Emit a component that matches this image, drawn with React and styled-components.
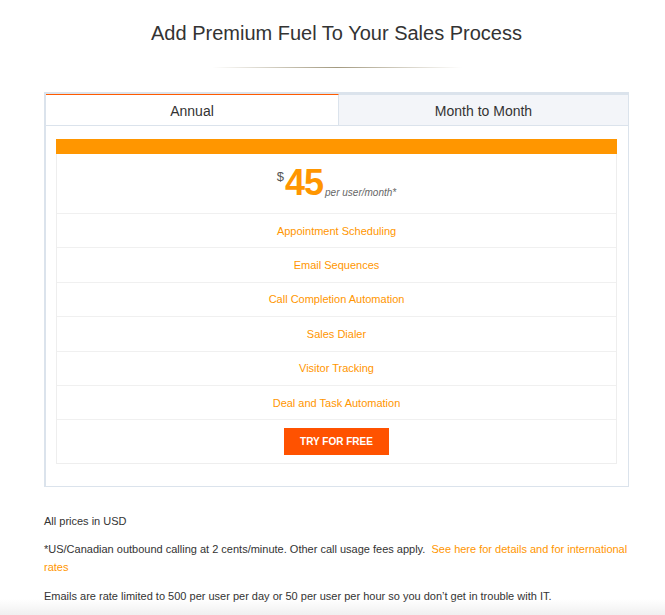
import React, { useState } from "react";
import styled, { createGlobalStyle } from "styled-components";

const Global = createGlobalStyle`
  html, body { margin: 0; padding: 0; background: #fff; }
  body { font-family: "Liberation Sans", Arial, sans-serif; color: #333; }
  * { box-sizing: border-box; }
`;

const Page = styled.div`
  width: 665px;
  height: 615px;
  position: relative;
  overflow: hidden;
  padding: 0 36px 0 44px;
`;

const Title = styled.h1`
  margin: 0;
  padding-top: 21px;
  font-size: 20px;
  font-weight: 400;
  line-height: 24px;
  text-align: center;
  color: #333;
`;

const Divider = styled.div`
  width: 250px;
  height: 1px;
  margin: 22px auto 24px;
  background: linear-gradient(to right, rgba(190,180,150,0), #a39a80 50%, rgba(190,180,150,0));
`;

const Box = styled.div`
  border: 2px solid #dbe3ec;
  border-right-width: 1px;
  border-bottom-width: 1px;
  width: 585px;
`;

const Tabs = styled.div`
  display: flex;
`;

const Tab = styled.button`
  flex: ${(p) => (p.$active ? "0 0 293px" : "1")};
  height: 32px;
  margin: 0;
  padding: 2px 0 0;
  font-family: inherit;
  font-size: 14px;
  color: #333;
  cursor: pointer;
  background: ${(p) => (p.$active ? "#fff" : "#f3f5f9")};
  border: 1px solid #dbe3ec;
  border-top: 1px solid ${(p) => (p.$active ? "#ff5a00" : "#dbe3ec")};
  border-left: none;
  border-right: ${(p) => (p.$active ? "1px solid #dbe3ec" : "none")};
`;

const Content = styled.div`
  padding: 13px 11px 22px 10px;
`;

const Card = styled.div`
  border: 1px solid #eeeeee;
  border-top: none;
`;

const Bar = styled.div`
  height: 15px;
  background: #ff9600;
  margin: 0 -1px;
`;

const PriceRow = styled.div`
  height: 60px;
  display: flex;
  justify-content: center;
  align-items: flex-start;
  padding-top: 13px;
  border-bottom: 1px solid #f0f0f0;
`;

const Currency = styled.span`
  font-size: 13px;
  color: #555;
  margin-top: 2px;
  margin-right: 1px;
`;

const Amount = styled.span`
  font-size: 36px;
  font-weight: 700;
  color: #ff9600;
  line-height: 32px;
  letter-spacing: -1px;
`;

const Per = styled.span`
  font-size: 10px;
  font-style: italic;
  color: #666;
  margin-top: 20px;
  margin-left: 2px;
`;

const Feature = styled.div`
  height: 34.4px;
  display: flex;
  align-items: center;
  justify-content: center;
  font-size: 11px;
  color: #ff9600;
  border-bottom: 1px solid #f0f0f0;
`;

const ButtonRow = styled.div`
  height: 43px;
  display: flex;
  justify-content: center;
  align-items: center;
`;

const TryButton = styled.button`
  width: 105px;
  height: 27px;
  background: #ff5200;
  color: #fff;
  border: none;
  font-family: inherit;
  font-size: 10px;
  font-weight: 700;
  margin-top: -1px;
  cursor: pointer;
`;

const Notes = styled.div`
  padding-top: 25px;
  font-size: 11px;
  color: #333;
`;

const Note = styled.p`
  margin: 0 0 ${(p) => p.$gap || 10}px;
  line-height: 18px;
`;

const Link = styled.a`
  color: #ff9600;
  text-decoration: none;
`;

const Fade = styled.div`
  position: absolute;
  left: 0;
  right: 0;
  bottom: 0;
  height: 16px;
  background: linear-gradient(to bottom, rgba(235,235,235,0), rgba(230,230,230,0.6));
  pointer-events: none;
`;

const features = [
  "Appointment Scheduling",
  "Email Sequences",
  "Call Completion Automation",
  "Sales Dialer",
  "Visitor Tracking",
  "Deal and Task Automation",
];

export default function App() {
  const [tab, setTab] = useState("annual");
  return (
    <>
      <Global />
      <Page>
        <Title>Add Premium Fuel To Your Sales Process</Title>
        <Divider />
        <Box>
          <Tabs>
            <Tab $active={tab === "annual"} onClick={() => setTab("annual")}>Annual</Tab>
            <Tab $active={tab === "monthly"} onClick={() => setTab("monthly")}>Month to Month</Tab>
          </Tabs>
          <Content>
            <Card>
              <Bar />
              <PriceRow>
                <Currency>$</Currency>
                <Amount>45</Amount>
                <Per>per user/month*</Per>
              </PriceRow>
              {features.map((f) => (
                <Feature key={f}>{f}</Feature>
              ))}
              <ButtonRow>
                <TryButton>TRY FOR FREE</TryButton>
              </ButtonRow>
            </Card>
          </Content>
        </Box>
        <Notes>
          <Note $gap={10}>All prices in USD</Note>
          <Note $gap={11}>
            *US/Canadian outbound calling at 2 cents/minute. Other call usage fees apply.{"\u00a0 "}
            <Link href="#">See here for details and for international rates</Link>
          </Note>
          <Note>Emails are rate limited to 500 per user per day or 50 per user per hour so you don’t get in trouble with IT.</Note>
        </Notes>
        <Fade />
      </Page>
    </>
  );
}
